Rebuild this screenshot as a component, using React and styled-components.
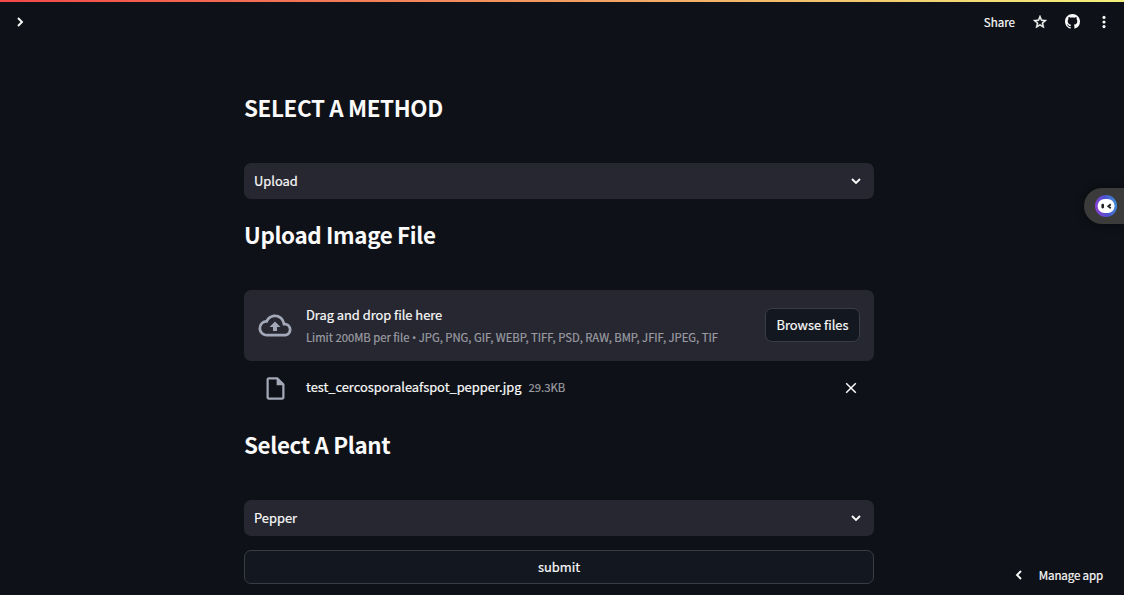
import React from "react";
import styled, { createGlobalStyle } from "styled-components";

const GlobalStyle = createGlobalStyle`
  * { box-sizing: border-box; }
  body {
    margin: 0;
    background: #0e1117;
    color: #fafafa;
    font-family: "Noto Sans CJK SC", "Noto Sans", sans-serif;
    -webkit-text-stroke: 0.2px currentColor;
    overflow: hidden;
  }
  button { font-family: inherit; color: inherit; cursor: pointer; }
`;

const Page = styled.div`
  position: relative;
  height: 595px;
  display: flex;
  flex-direction: column;
  background: #0e1117;
`;

const Decoration = styled.div`
  height: 2px;
  background: linear-gradient(90deg, #ff4b4b, #fffd80);
  opacity: 0.95;
`;

const Header = styled.header`
  height: 39px;
  padding: 0 4px 0 13px;
  display: flex;
  align-items: center;
  justify-content: space-between;
`;

const Actions = styled.div`
  display: flex;
  align-items: center;
`;

const IconButton = styled.button`
  width: ${(p) => p.$w || 32}px;
  height: 28px;
  padding: 0;
  border: 0;
  background: none;
  display: flex;
  align-items: center;
  justify-content: center;
`;

const Share = styled.span`
  font-size: 11.6px;
  line-height: 18px;
  margin-right: 9px;
`;

const Main = styled.main`
  width: 630px;
  margin-left: 244px;
  padding-top: 50px;
  display: flex;
  flex-direction: column;
`;

const Heading = styled.h2`
  margin: ${(p) => p.$top || 0}px 0 40px;
  height: 32px;
  font-size: 22.4px;
  line-height: 32px;
  font-weight: 700;
  white-space: nowrap;
  letter-spacing: -0.37px;
  -webkit-text-stroke: 0;
`;

const Select = styled.div`
  height: 36px;
  padding: 0 12px 0 10px;
  border-radius: 7px;
  background: #262730;
  display: flex;
  align-items: center;
  justify-content: space-between;
  font-size: 12.9px;
  line-height: 20px;
`;

const Dropzone = styled.section`
  height: 71px;
  padding: 0 14px;
  border-radius: 7px;
  background: #262730;
  display: flex;
  align-items: center;
`;

const DropText = styled.div`
  flex: 1;
  margin-left: 14px;
  display: flex;
  flex-direction: column;
  gap: 3px;
  white-space: nowrap;
`;

const Label = styled.span`
  font-size: 12.9px;
  line-height: 20px;
  letter-spacing: -0.03px;
`;

const Muted = styled.span`
  font-size: 11.3px;
  line-height: 19px;
  color: #9c9da3;
  letter-spacing: -0.03px;
`;

const Bullet = styled.span`
  font-family: "Open Sans", sans-serif;
  margin: 0 -0.3px;
`;

const Button = styled.button`
  height: 34px;
  width: ${(p) => p.$w};
  margin-top: ${(p) => p.$top || 0}px;
  margin-bottom: 1px;
  padding: 0 0 1px;
  border: 1px solid #3b3d45;
  border-radius: 7px;
  background: #131720;
  font-size: 12.9px;
  line-height: 20px;
  -webkit-text-stroke: inherit;
  white-space: nowrap;
`;

const FileRow = styled.div`
  height: 54px;
  padding: 0 17px 0 18px;
  display: flex;
  align-items: center;
`;

const FileInfo = styled.div`
  flex: 1;
  margin-left: 17px;
  padding-bottom: 2px;
  display: flex;
  align-items: center;
  gap: 7px;
`;

const Assistant = styled.aside`
  position: absolute;
  top: 188px;
  right: 0;
  width: 40px;
  height: 36px;
  padding-left: 11px;
  border-radius: 18px 0 0 18px;
  background: #3b3b3b;
  box-shadow: 0 0 8px rgba(0, 0, 0, 0.45);
  display: flex;
  align-items: center;
`;

const ManageApp = styled.div`
  position: absolute;
  right: 21px;
  bottom: 10px;
  display: flex;
  align-items: center;
  gap: 14px;
  font-size: 11.6px;
  line-height: 20px;
  letter-spacing: -0.17px;
`;

const Chevron = ({ dir = "down" }) => {
  const turn = { down: 0, left: 90, right: -90 }[dir];
  return (
    <svg width="12" height="12" viewBox="0 0 12 12" fill="none">
      <path
        d="M2 4l4 4 4-4"
        stroke="#fafafa"
        strokeWidth="1.9"
        transform={`rotate(${turn} 6 6)`}
      />
    </svg>
  );
};

const StarIcon = () => (
  <svg width="16" height="16" viewBox="0 0 24 24" fill="#fafafa" stroke="#fafafa" strokeWidth="0.7">
    <path d="M22 9.24l-7.19-.62L12 2 9.19 8.63 2 9.24l5.46 4.73L5.82 21 12 17.27 18.18 21l-1.63-7.03L22 9.24zM12 15.4l-3.76 2.27 1-4.28-3.32-2.88 4.38-.38L12 6.1l1.71 4.04 4.38.38-3.32 2.88 1 4.28L12 15.4z" />
  </svg>
);

const GithubIcon = () => (
  <svg width="15" height="15" viewBox="0 0 16 16" fill="#fafafa">
    <path d="M8 0C3.58 0 0 3.58 0 8c0 3.54 2.29 6.53 5.47 7.59.4.07.55-.17.55-.38 0-.19-.01-.82-.01-1.49-2.01.37-2.53-.49-2.69-.94-.09-.23-.48-.94-.82-1.13-.28-.15-.68-.52-.01-.53.63-.01 1.08.58 1.23.82.72 1.21 1.87.87 2.33.66.07-.52.28-.87.51-1.07-1.78-.2-3.64-.89-3.64-3.95 0-.87.31-1.59.82-2.15-.08-.2-.36-1.02.08-2.12 0 0 .67-.21 2.2.82.64-.18 1.32-.27 2-.27s1.36.09 2 .27c1.53-1.04 2.2-.82 2.2-.82.44 1.1.16 1.92.08 2.12.51.56.82 1.27.82 2.15 0 3.07-1.87 3.75-3.65 3.95.29.25.54.73.54 1.48 0 1.07-.01 1.93-.01 2.2 0 .21.15.46.55.38A8.01 8.01 0 0016 8c0-4.42-3.58-8-8-8z" />
  </svg>
);

const DotsIcon = () => (
  <svg width="16" height="16" viewBox="0 0 16 16" fill="#fafafa">
    <circle cx="8" cy="3.4" r="1.55" />
    <circle cx="8" cy="8" r="1.55" />
    <circle cx="8" cy="12.6" r="1.55" />
  </svg>
);

const CloudIcon = () => (
  <svg width="34" height="33" viewBox="0 0 24 24" fill="#a3a8b8">
    <path d="M19.35 10.04A7.49 7.49 0 0012 4C9.11 4 6.6 5.64 5.35 8.04A5.994 5.994 0 000 14c0 3.31 2.69 6 6 6h13c2.76 0 5-2.24 5-5 0-2.64-2.05-4.78-4.65-4.96zM19 18H6c-2.21 0-4-1.79-4-4 0-2.05 1.53-3.76 3.56-3.97l1.07-.11.5-.95A5.469 5.469 0 0112 6c2.62 0 4.88 1.86 5.39 4.43l.3 1.5 1.53.11A2.98 2.98 0 0122 15c0 1.65-1.35 3-3 3zM8 13h2.55v3h2.9v-3H16l-4-4z" />
  </svg>
);

const FileIcon = () => (
  <svg width="27" height="27" viewBox="0 0 24 24" fill="#a3a8b8">
    <path d="M14 2H6c-1.1 0-1.99.9-1.99 2L4 20c0 1.1.89 2 1.99 2H18c1.1 0 2-.9 2-2V8l-6-6zM6 20V4h7v5h5v11H6z" />
  </svg>
);

const CloseIcon = () => (
  <svg width="12" height="12" viewBox="0 0 12 12" fill="none">
    <path d="M1.2 1.2l9.6 9.6M10.8 1.2l-9.6 9.6" stroke="#fafafa" strokeWidth="1.5" />
  </svg>
);

const AssistantIcon = () => (
  <svg width="22" height="22" viewBox="0 0 22 22">
    <defs>
      <linearGradient id="ring" x1="0" y1="0.6" x2="1" y2="0.4">
        <stop offset="0" stopColor="#8a3fd6" />
        <stop offset="0.5" stopColor="#4d50cf" />
        <stop offset="1" stopColor="#3d8fd8" />
      </linearGradient>
    </defs>
    <circle cx="11" cy="11" r="11" fill="url(#ring)" />
    <rect x="2.6" y="4" width="17" height="14" rx="7" fill="#fff" />
    <rect x="6.4" y="8.8" width="2.6" height="4.6" rx="1.1" fill="#222" />
    <path d="M15.8 9.2l-2.5 2 2.5 2" fill="none" stroke="#222" strokeWidth="1.8" />
  </svg>
);

export default function App() {
  return (
    <Page>
      <GlobalStyle />
      <Decoration />
      <Header>
        <IconButton $w={14}>
          <Chevron dir="right" />
        </IconButton>
        <Actions>
          <Share>Share</Share>
          <IconButton><StarIcon /></IconButton>
          <IconButton><GithubIcon /></IconButton>
          <IconButton><DotsIcon /></IconButton>
        </Actions>
      </Header>
      <Main>
        <Heading>SELECT A METHOD</Heading>
        <Select>Upload<Chevron /></Select>
        <Heading $top={19}>Upload Image File</Heading>
        <Dropzone>
          <CloudIcon />
          <DropText>
            <Label>Drag and drop file here</Label>
            <Muted>Limit 200MB per file<Bullet> • </Bullet>JPG, PNG, GIF, WEBP, TIFF, PSD, RAW, BMP, JFIF, JPEG, TIF</Muted>
          </DropText>
          <Button $w="95px">Browse files</Button>
        </Dropzone>
        <FileRow>
          <FileIcon />
          <FileInfo>
            <Label>test_cercosporaleafspot_pepper.jpg</Label>
            <Muted>29.3KB</Muted>
          </FileInfo>
          <CloseIcon />
        </FileRow>
        <Heading $top={13}>Select A Plant</Heading>
        <Select>Pepper<Chevron /></Select>
        <Button $w="100%" $top={14}>submit</Button>
      </Main>
      <Assistant><AssistantIcon /></Assistant>
      <ManageApp><Chevron dir="left" />Manage app</ManageApp>
    </Page>
  );
}
